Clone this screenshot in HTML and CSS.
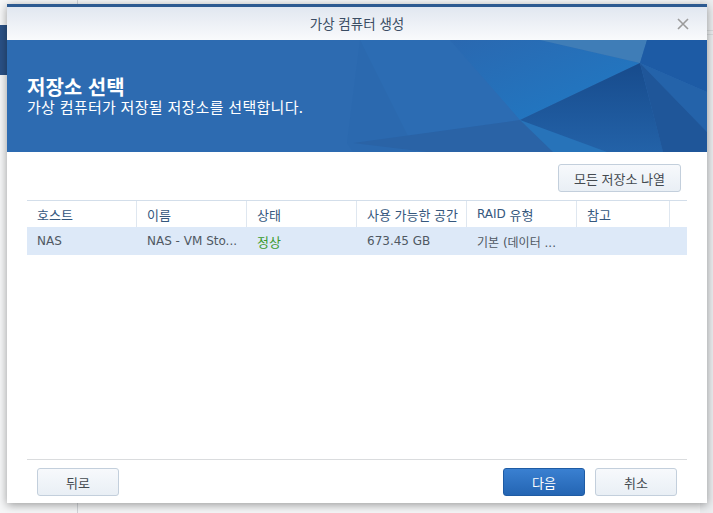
FILE: index.html
```html
<!DOCTYPE html>
<html lang="ko">
<head>
<meta charset="utf-8">
<title>가상 컴퓨터 생성</title>
<link rel="stylesheet" href="styles.css">
</head>
<body>
<div class="desk">
  <div class="bg-band"></div>
  <div class="bg-line"></div>
  <div class="bg-right"><div class="bg-right-bar"></div></div>

  <div class="dialog">
    <div class="titlebar">
      <span class="title">가상 컴퓨터 생성</span>
      <svg class="close" width="12" height="12" viewBox="0 0 12 12" aria-hidden="true">
        <path d="M1 1 L11 11 M11 1 L1 11" stroke="#9b9b9b" stroke-width="1.6" fill="none"/>
      </svg>
    </div>

    <div class="banner">
      <svg class="shards" width="700" height="112" viewBox="0 0 700 112" aria-hidden="true">
        <defs>
          <linearGradient id="gMid" x1="0" y1="0" x2="1" y2="1">
            <stop offset="0" stop-color="#2a68b0"/>
            <stop offset="1" stop-color="#1f7bc6"/>
          </linearGradient>
          <linearGradient id="gDark" x1="0" y1="0" x2="0" y2="1">
            <stop offset="0" stop-color="#174b8c"/>
            <stop offset="1" stop-color="#2362a8"/>
          </linearGradient>
        </defs>
        <rect width="700" height="112" fill="#2d6bb1"/>
        <polygon points="353,0 443,0 513,80 352,103 409,112 400,112" fill="#2c6cb3"/>
        <polygon points="353,0 409,112 346,112 340,103" fill="#2b69af"/>
        <polygon points="443,0 533,0 633,23 513,80" fill="url(#gMid)"/>
        <polygon points="533,0 640,0 633,23" fill="#3f7db7"/>
        <polygon points="640,0 700,0 700,52 633,23" fill="#1d5ba5"/>
        <polygon points="633,23 700,52 700,92" fill="#2463aa"/>
        <polygon points="633,23 656,112 560,112 513,80" fill="url(#gDark)"/>
        <polygon points="513,80 560,112 546,112 480,112 420,112 346,103" fill="#2a63a6"/>
        <polygon points="513,80 546,112 600,112" fill="#2773b9"/>
        <polygon points="633,23 700,92 700,112 656,112" fill="#1f5699"/>
      </svg>
      <div class="banner-text">
        <h1 class="banner-title">저장소 선택</h1>
        <p class="banner-sub">가상 컴퓨터가 저장될 저장소를 선택합니다.</p>
      </div>
    </div>

    <div class="content">
      <div class="toolbar">
        <button class="btn btn-wide">모든 저장소 나열</button>
      </div>
      <div class="grid">
        <div class="hcell">호스트</div>
        <div class="hcell">이름</div>
        <div class="hcell">상태</div>
        <div class="hcell">사용 가능한 공간</div>
        <div class="hcell"><span class="latin">RAID</span>&nbsp;유형</div>
        <div class="hcell">참고</div>
        <div class="hcell hlast"></div>

        <div class="cell">NAS</div>
        <div class="cell">NAS - VM Sto...</div>
        <div class="cell ok">정상</div>
        <div class="cell">673.45 GB</div>
        <div class="cell">기본 (데이터 ...</div>
        <div class="cell"></div>
        <div class="cell"></div>
      </div>
    </div>

    <div class="footer">
      <button class="btn">뒤로</button>
      <div class="footer-right">
        <button class="btn btn-primary">다음</button>
        <button class="btn">취소</button>
      </div>
    </div>
  </div>
</div>
</body>
</html>
```

FILE: styles.css
```css
* { box-sizing: border-box; }

html, body {
  margin: 0;
  padding: 0;
}

body {
  background: #f4f5f7;
  font-family: "DejaVu Sans", "Noto Sans CJK KR", sans-serif;
  font-size: 12px;
}

.desk {
  position: relative;
  width: 713px;
  height: 513px;
  overflow: hidden;
  padding: 4px 0 0 7px;
  background: #f6f7f8;
}

.bg-band {
  position: absolute;
  left: 0;
  top: 25px;
  width: 40px;
  height: 50px;
  background: #2a5186;
}

.bg-line {
  position: absolute;
  left: 77px;
  top: 0;
  width: 1px;
  height: 513px;
  background: #d2d5d9;
}

.bg-right {
  position: absolute;
  left: 700px;
  top: 0;
  width: 13px;
  height: 513px;
  background: #eceef0;
}

.bg-right-bar {
  margin-top: 30px;
  height: 5px;
  border-top: 1px solid #d9dcdf;
  border-bottom: 1px solid #d9dcdf;
}

.dialog {
  position: relative;
  width: 700px;
  height: 499px;
  background: #fff;
  box-shadow: 0 2px 9px rgba(0, 0, 0, 0.38);
  display: flex;
  flex-direction: column;
}

.titlebar {
  position: relative;
  height: 36px;
  border-top: 3px solid #2d5a91;
  background: linear-gradient(#e1e7f0, #f9fafc);
  display: flex;
  align-items: center;
  justify-content: center;
}

.title {
  font-family: "Noto Sans CJK KR", sans-serif;
  font-size: 13.5px;
  color: #3a4d63;
  margin-top: -2px;
}

.close {
  position: absolute;
  right: 18px;
  top: 11px;
}

.banner {
  position: relative;
  height: 112px;
  background: #2d6bb1;
  overflow: hidden;
}

.shards {
  position: absolute;
  left: 0;
  top: 0;
  display: block;
}

.banner-text {
  position: relative;
  padding: 36px 0 0 20px;
  color: #fff;
  font-family: "Noto Sans CJK KR", sans-serif;
}

.banner-title {
  margin: 0;
  font-size: 20px;
  font-weight: 700;
  line-height: 22px;
}

.banner-sub {
  margin: 0;
  font-size: 15px;
  line-height: 18px;
  letter-spacing: 0.3px;
}

.content {
  flex: 1;
  padding: 12px 20px 0 20px;
}

.toolbar {
  display: flex;
  justify-content: flex-end;
  padding-right: 6px;
  margin-bottom: 8px;
}

.btn {
  height: 28px;
  width: 82px;
  padding: 0;
  border: 1px solid #c3cfdc;
  border-radius: 3px;
  background: linear-gradient(#f7f9fc, #e9eff5);
  color: #444a50;
  font-family: "Noto Sans CJK KR", sans-serif;
  font-size: 13px;
  cursor: pointer;
}

.btn-wide {
  width: 123px;
}

.btn-primary {
  border-color: #1e5ba4;
  background: linear-gradient(#3a80d1, #2465b3);
  color: #fff;
}

.grid {
  display: grid;
  grid-template-columns: 110px 110px 110px 110px 110px 93px 17px;
  border-top: 1px solid #d3deea;
}

.hcell {
  height: 26px;
  padding-left: 10px;
  display: flex;
  align-items: center;
  border-right: 1px solid #dfe7f0;
  color: #35577d;
  font-family: "Noto Sans CJK KR", sans-serif;
  font-size: 13px;
  white-space: nowrap;
}

.latin {
  font-family: "DejaVu Sans", sans-serif;
  font-size: 12px;
}

.hlast {
  border-right: none;
}

.cell {
  height: 28px;
  padding-left: 10px;
  display: flex;
  align-items: center;
  background: #dde9f8;
  color: #4f5862;
  white-space: nowrap;
}

.ok {
  color: #3a9a2c;
  font-family: "Noto Sans CJK KR", sans-serif;
  font-size: 13px;
}

.footer {
  margin: 0 20px;
  border-top: 1px solid #dadcde;
  padding: 8px 10px 7px 10px;
  display: flex;
  justify-content: space-between;
}

.footer-right {
  display: flex;
  gap: 10px;
}
```
